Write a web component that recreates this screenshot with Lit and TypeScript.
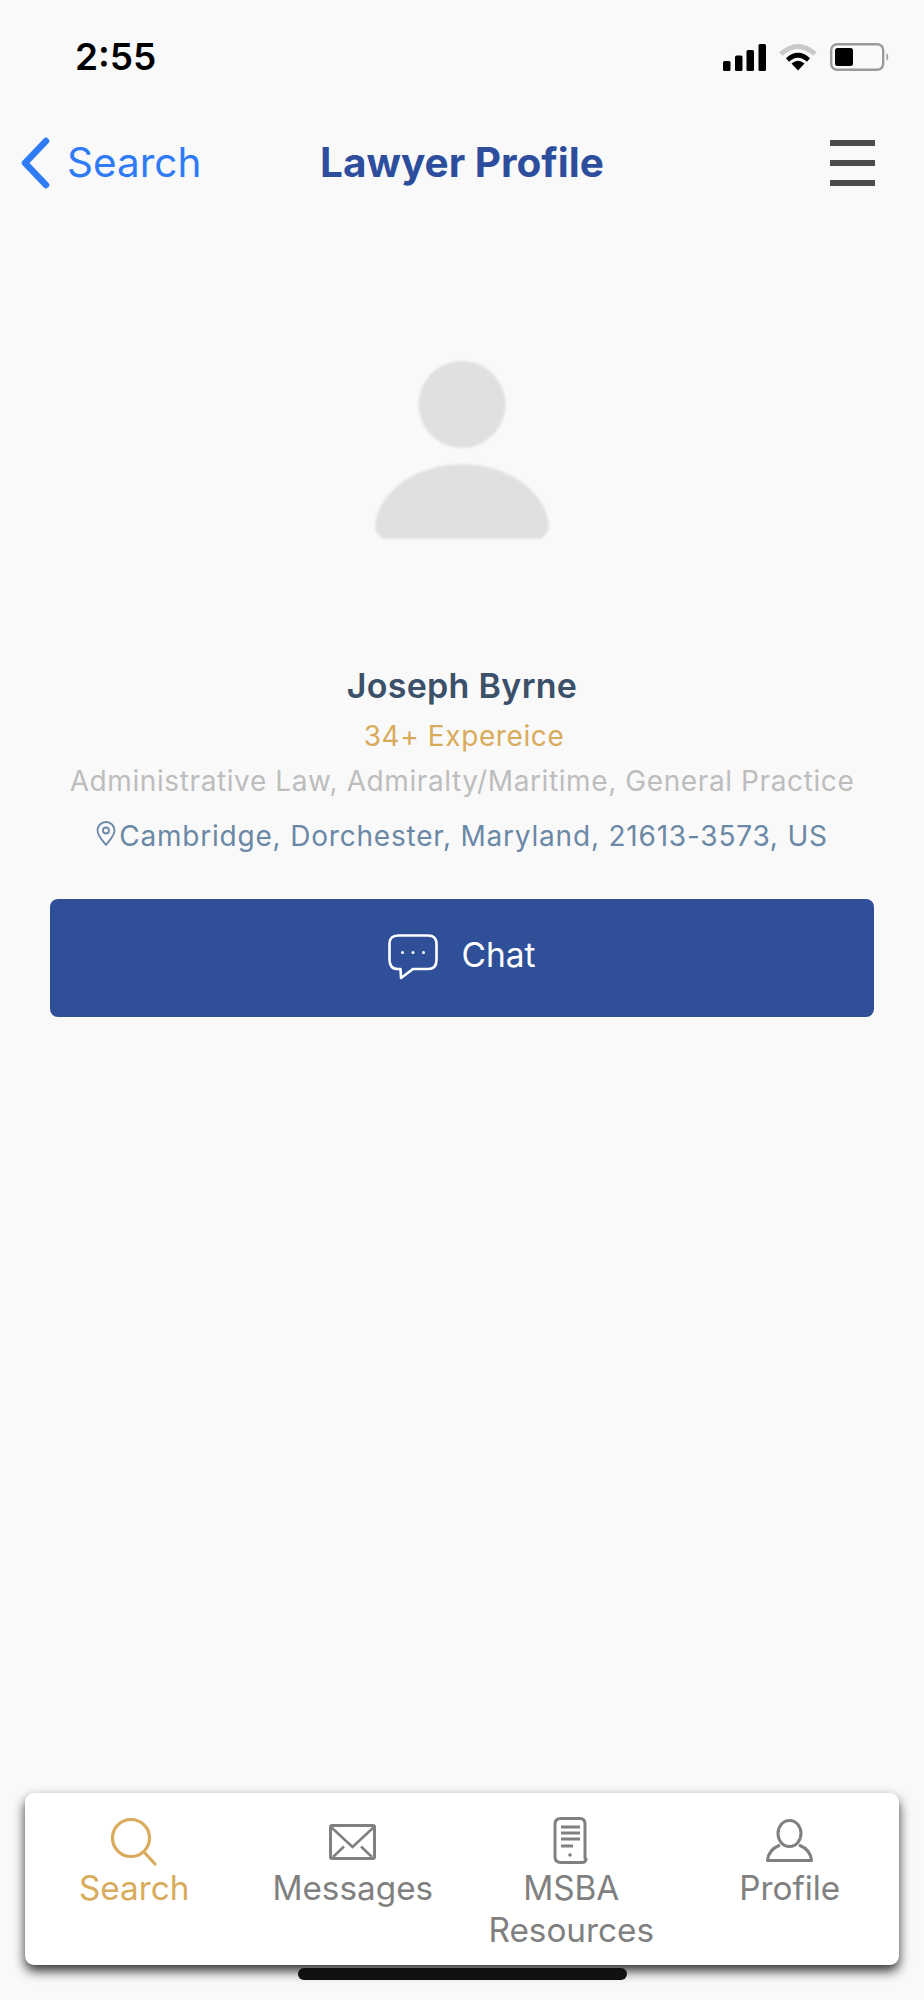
import { LitElement, html, css, svg } from "lit";
import { customElement } from "lit/decorators.js";

const searchIcon = svg`<circle cx="21" cy="21" r="18.5" fill="none" stroke="currentColor" stroke-width="3.2"/><path d="M34 35 L45 47" fill="none" stroke="currentColor" stroke-width="3.2" stroke-linecap="round"/>`;
const mailIcon = svg`<g transform="translate(0 7)"><rect x="1.5" y="1.5" width="44" height="33" rx="1.5" fill="none" stroke="currentColor" stroke-width="3"/><path d="M2 3 L23.5 23 L45 3 M4 33 L15 22.5 M43 33 L32 22.5" fill="none" stroke="currentColor" stroke-width="2.6"/></g>`;
const docIcon = svg`<g transform="translate(6 0)"><path d="M32 42 V7 Q32 1.5 27 1.5 H8 Q2 1.5 2 7 V40 Q2 45.5 8 45.5 H29 Q33 45.5 33 41" fill="none" stroke="currentColor" stroke-width="3"/><path d="M8 10 H27 M8 16 H27 M8 22 H27 M8 29 H20" fill="none" stroke="currentColor" stroke-width="2.8"/><circle cx="17" cy="38" r="1.8" fill="currentColor"/></g>`;
const userIcon = svg`<g transform="translate(0 2)"><ellipse cx="23.5" cy="14.5" rx="11.5" ry="13" fill="none" stroke="currentColor" stroke-width="3"/><path d="M14 26 Q2 31 1.5 41.5 H45.5 Q45 31 33 26" fill="none" stroke="currentColor" stroke-width="3" stroke-linejoin="round"/></g>`;

@customElement("app-root")
export class AppRoot extends LitElement {
  static styles = css`
    :host { display: block; width: 924px; height: 2000px; background: #f9f9f9; font-family: Inter, "Noto Sans", sans-serif; overflow: hidden; }
    .page { position: relative; display: flex; flex-direction: column; height: 2000px; box-sizing: border-box; }

    .status { display: flex; justify-content: space-between; align-items: center; height: 56px; margin-top: 29px; padding: 0 33px 0 75px; }
    .time { font: 600 37px/56px Inter, sans-serif; color: #000; letter-spacing: 0; }
    .status-icons { display: flex; align-items: center; gap: 13px; }
    .signal { width: 43px; height: 27px; display: block; }
    .wifi { width: 38px; height: 28px; display: block; }
    .battery { width: 61px; height: 28px; display: block; }

    .nav { display: grid; grid-template-columns: 1fr auto 1fr; align-items: center; height: 60px; margin-top: 48px; padding: 0 49px 0 21px; }
    .back { display: flex; align-items: center; gap: 17px; color: #2f7bf6; font-size: 40.5px; line-height: 60px; }
    .chev { width: 30px; height: 52px; display: block; margin-left: -1px; }
    .title { color: #2d4e9c; font-size: 40.5px; font-weight: 700; line-height: 60px; margin-left: 28px; }
    .menu { justify-self: end; display: flex; flex-direction: column; gap: 13.5px; width: 45px; }
    .menu span { display: block; height: 6.5px; background: #4b4b4b; }

    .avatar { align-self: center; display: block; width: 176px; height: 178px; margin-top: 168px; filter: blur(1px); }

    .info { display: flex; flex-direction: column; align-items: center; text-align: center; margin-top: 125px; }
    .name { color: #3b5069; font-size: 34px; font-weight: 600; line-height: 44px; letter-spacing: 0.3px; }
    .exp { color: #d9ab5c; font-size: 28px; line-height: 44px; margin: 6px 0 0 4px; letter-spacing: 0.6px; }
    .areas { color: #bdbdbd; font-size: 28px; line-height: 46px; letter-spacing: 0.6px; }
    .loc { display: flex; align-items: center; color: #6b88a6; font-size: 28px; line-height: 46px; margin-top: 9px; letter-spacing: 0.8px; }
    .pin { width: 20px; height: 26px; display: block; margin-right: 3px; margin-top: -4px; }

    .chat { display: flex; align-items: center; justify-content: center; gap: 23px; box-sizing: border-box; height: 118px; padding-bottom: 6px; margin: 40px 50px 0; background: #2f4f98; border-radius: 8px; color: #fff; font-size: 33.5px; }
    .chat-icon { width: 50px; height: 46px; display: block; margin-top: 3px; }

    .spacer { flex: 1; }
    .tabbar { display: grid; grid-template-columns: repeat(4, 1fr); height: 172px; margin: 0 25px 35px; background: #fff; border-radius: 9px; box-shadow: 0 6px 12px rgba(0, 0, 0, 0.8); }
    .tab { display: flex; flex-direction: column; align-items: center; text-align: center; color: #808080; font-size: 33.3px; line-height: 42px; }
    .tab.active { color: #d9ab5c; }
    .ic { width: 48px; height: 50px; margin-top: 24px; display: block; }
    .home { position: absolute; left: 298px; top: 1968px; width: 329px; height: 12px; background: #111; border-radius: 6px; }
  `;

  render() {
    const tabs = [
      { label: "Search", icon: searchIcon, active: true },
      { label: "Messages", icon: mailIcon, active: false },
      { label: "MSBA Resources", icon: docIcon, active: false },
      { label: "Profile", icon: userIcon, active: false },
    ];
    return html`
      <div class="page">
        <div class="status">
          <span class="time">2:55</span>
          <div class="status-icons">
            <svg class="signal" viewBox="0 0 43 27"><rect x="0" y="17" width="7.5" height="10" rx="1.5"/><rect x="12" y="11.5" width="7.5" height="15.5" rx="1.5"/><rect x="23.5" y="6" width="7.5" height="21" rx="1.5"/><rect x="35.5" y="0" width="7.5" height="27" rx="1.5"/></svg>
            <svg class="wifi" viewBox="0 0 38 28"><path d="M2 11 Q19 -4 36 11" fill="none" stroke="#c9c9c9" stroke-width="5"/><path d="M8.5 17 Q19 7.5 29.5 17" fill="none" stroke="#000" stroke-width="4.6"/><path d="M19 27.5 L12.5 20.5 Q19 15 25.5 20.5 Z" fill="#000"/></svg>
            <svg class="battery" viewBox="0 0 61 28"><rect x="1.2" y="1.2" width="52" height="25.6" rx="6" fill="none" stroke="#9a9a9a" stroke-width="2.4"/><rect x="5" y="5" width="18" height="18" rx="2.5" fill="#000"/><path d="M56.5 9.5 Q60 14 56.5 18.5 Z" fill="#9a9a9a"/></svg>
          </div>
        </div>

        <div class="nav">
          <div class="back">
            <svg class="chev" viewBox="0 0 30 52"><path d="M26 4 L5 26 L26 48" fill="none" stroke="#2f7bf6" stroke-width="6.5" stroke-linecap="round" stroke-linejoin="round"/></svg>
            <span>Search</span>
          </div>
          <div class="title">Lawyer Profile</div>
          <div class="menu"><span></span><span></span><span></span></div>
        </div>

        <svg class="avatar" viewBox="0 0 174 176"><circle cx="87" cy="43" r="43" fill="#e0e0e0"/><path d="M1 164 C3 130 40 102 87 102 C134 102 171 130 173 164 Q173 170 165 176 H9 Q1 170 1 164 Z" fill="#e0e0e0"/></svg>

        <div class="info">
          <div class="name">Joseph Byrne</div>
          <div class="exp">34+ Expereice</div>
          <div class="areas">Administrative Law, Admiralty/Maritime, General Practice</div>
          <div class="loc">
            <svg class="pin" viewBox="0 0 20 26"><path d="M10 24 C6 19 1.5 14.5 1.5 9.5 A8.5 8.5 0 0 1 18.5 9.5 C18.5 14.5 14 19 10 24 Z" fill="none" stroke="#6b88a6" stroke-width="1.8" stroke-linejoin="round"/><circle cx="10" cy="9.5" r="3" fill="none" stroke="#6b88a6" stroke-width="1.8"/></svg>
            <span>Cambridge, Dorchester, Maryland, 21613-3573, US</span>
          </div>
        </div>

        <div class="chat">
          <svg class="chat-icon" viewBox="0 0 50 46"><path d="M10 1.5 H40 Q48.5 1.5 48.5 10 V26 Q48.5 35 40 35 H25 L13 44 L12.5 35 H10 Q1.5 35 1.5 26 V10 Q1.5 1.5 10 1.5 Z" fill="none" stroke="#fff" stroke-width="2.6" stroke-linejoin="round"/><circle cx="14.5" cy="18.5" r="1.5" fill="#fff"/><circle cx="25" cy="18.5" r="1.5" fill="#fff"/><circle cx="35.5" cy="18.5" r="1.5" fill="#fff"/></svg>
          <span>Chat</span>
        </div>

        <div class="spacer"></div>

        <div class="tabbar">
          ${tabs.map(
            (t) => html`<div class="tab ${t.active ? "active" : ""}">
              <svg class="ic" viewBox="0 0 48 50">${t.icon}</svg>
              <span>${t.label}</span>
            </div>`
          )}
        </div>
        <div class="home"></div>
      </div>
    `;
  }
}
